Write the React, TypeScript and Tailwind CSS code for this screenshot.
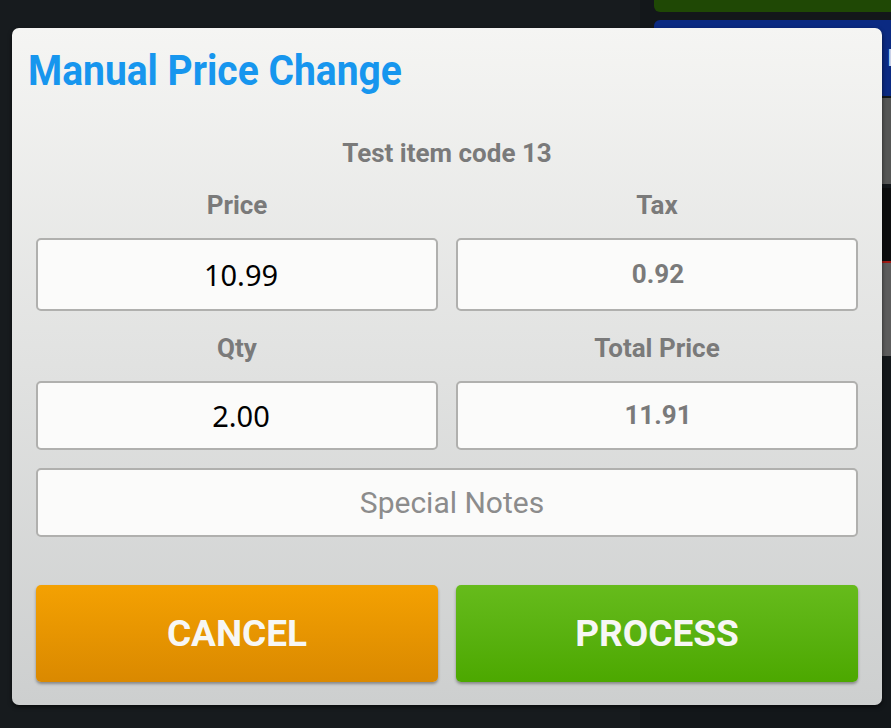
import React from 'react'

const Field = ({ value, tone }: { value: string; tone: 'input' | 'readonly' | 'placeholder' }) => {
  const text =
    tone === 'input'
      ? 'pl-[8px] text-[29px] font-normal text-black font-["Noto_Sans",Roboto,sans-serif]'
      : tone === 'readonly'
      ? 'pl-[2px] text-[26px] font-bold text-[#7a7a7a]'
      : 'pl-[10px] text-[30px] font-normal text-[#8c8c8c]'
  return (
    <div className="flex h-full items-center justify-center rounded-[5px] border-2 border-[#b0b0ae] bg-[#fbfbfa]">
      <span className={text}>{value}</span>
    </div>
  )
}

const Label = ({ children }: { children: React.ReactNode }) => (
  <div className="text-center text-[26px] font-bold leading-[30px] text-[#7a7a7a]">{children}</div>
)

export default function App() {
  return (
    <div
      className="relative h-[728px] w-[891px] overflow-hidden bg-[#171b1e]"
      style={{ fontFamily: 'Roboto, "Liberation Sans", sans-serif' }}
    >
      {/* background app behind the dialog */}
      <div className="absolute right-0 top-0 h-full w-[251px] bg-[#13171a]">
        <div className="ml-[14px] h-[12px] rounded-bl-[6px] bg-[#1f4805]" />
        <div className="ml-[14px] mt-[8px] flex h-[76px] items-center justify-end rounded-tl-[6px] bg-[#0b2a82] text-[24px] font-bold text-[#c8d0e8]">
          <span className="-mr-[10px]">E</span>
        </div>
        <div className="ml-[14px] mt-[2px] h-[86px] bg-[#555655]" />
        <div className="ml-[14px] mt-[4px] h-[73px] bg-[#0c0d0e]" />
        <div className="ml-[14px] h-[2px] bg-[#a11a14]" />
        <div className="ml-[14px] h-[93px] bg-[#5c5c5c]" />
      </div>

      {/* dialog */}
      <div className="absolute left-[12px] top-[28px] flex h-[677px] w-[870px] flex-col rounded-[7px] bg-gradient-to-b from-[#f5f5f3] to-[#cdcfcf] shadow-[0_2px_4px_rgba(0,0,0,0.6)]">
        <h1 className="ml-[16px] mt-[21px] origin-left scale-y-[1.07] text-[39px] font-bold leading-[44px] text-[#1796ee]">
          Manual Price Change
        </h1>
        <div className="px-[24px]">
          <div className="mt-[45px]">
            <Label>Test item code 13</Label>
          </div>
          <div className="mt-[22px] grid grid-cols-2 gap-x-[18px]">
            <Label>Price</Label>
            <Label>Tax</Label>
            <div className="mt-[18px] h-[73px]">
              <Field value="10.99" tone="input" />
            </div>
            <div className="mt-[18px] h-[73px]">
              <Field value="0.92" tone="readonly" />
            </div>
            <div className="mt-[22px]">
              <Label>Qty</Label>
            </div>
            <div className="mt-[22px]">
              <Label>Total Price</Label>
            </div>
            <div className="mt-[18px] h-[69px]">
              <Field value="2.00" tone="input" />
            </div>
            <div className="mt-[18px] h-[69px]">
              <Field value="11.91" tone="readonly" />
            </div>
          </div>
          <div className="mt-[18px] h-[69px]">
            <Field value="Special Notes" tone="placeholder" />
          </div>
          <div className="mt-[48px] grid grid-cols-2 gap-x-[18px]">
            <button className="flex h-[97px] items-center justify-center rounded-[5px] bg-gradient-to-b from-[#f4a102] to-[#da8900] text-[37px] font-bold text-[#f7f7f5] shadow-[0_2px_3px_rgba(0,0,0,0.35)]">
              CANCEL
            </button>
            <button className="flex h-[97px] items-center justify-center rounded-[5px] bg-gradient-to-b from-[#66bb1b] to-[#4ca800] text-[37px] font-bold text-[#f7f7f5] shadow-[0_2px_3px_rgba(0,0,0,0.35)]">
              PROCESS
            </button>
          </div>
        </div>
      </div>
    </div>
  )
}
